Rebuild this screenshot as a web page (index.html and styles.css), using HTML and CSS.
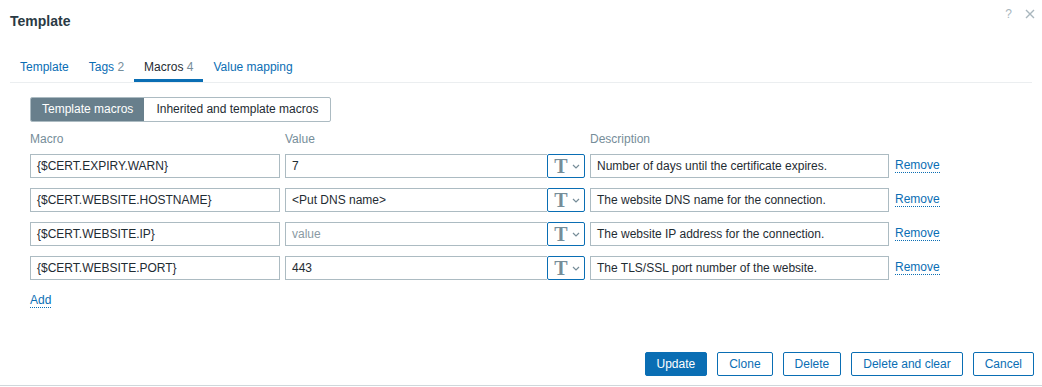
FILE: index.html
```html
<!DOCTYPE html>
<html>
<head>
<meta charset="utf-8">
<link rel="stylesheet" href="styles.css">
</head>
<body>
<div class="dialog">
  <div class="head">
    <h4 class="title">Template</h4>
    <div class="head-icons">
      <span class="help">?</span>
      <svg class="close" width="10" height="10" viewBox="0 0 10 10"><path d="M1 1L9 9M9 1L1 9" stroke="#a9b6bd" stroke-width="1.4" fill="none"/></svg>
    </div>
  </div>
  <ul class="tabs">
    <li class="tab">Template</li>
    <li class="tab">Tags <span class="cnt">2</span></li>
    <li class="tab active">Macros <span class="cnt">4</span></li>
    <li class="tab">Value mapping</li>
  </ul>
  <div class="body">
    <div class="toggle">
      <span class="seg on">Template macros</span>
      <span class="seg">Inherited and template macros</span>
    </div>
    <div class="grid">
      <div class="lbl">Macro</div>
      <div class="lbl">Value</div>
      <div class="lbl">Description</div>
      <div></div>

      <div class="field">{$CERT.EXPIRY.WARN}</div>
      <div class="value"><div class="field vtext">7</div><span class="tbtn"><span class="tglyph">T</span><svg width="8" height="5" viewBox="0 0 8 5"><path d="M1 1L4 4L7 1" stroke="#768d99" stroke-width="1.2" fill="none"/></svg></span></div>
      <div class="field">Number of days until the certificate expires.</div>
      <a class="link">Remove</a>

      <div class="field">{$CERT.WEBSITE.HOSTNAME}</div>
      <div class="value"><div class="field vtext">&lt;Put DNS name&gt;</div><span class="tbtn"><span class="tglyph">T</span><svg width="8" height="5" viewBox="0 0 8 5"><path d="M1 1L4 4L7 1" stroke="#768d99" stroke-width="1.2" fill="none"/></svg></span></div>
      <div class="field">The website DNS name for the connection.</div>
      <a class="link">Remove</a>

      <div class="field">{$CERT.WEBSITE.IP}</div>
      <div class="value"><div class="field vtext ph">value</div><span class="tbtn"><span class="tglyph">T</span><svg width="8" height="5" viewBox="0 0 8 5"><path d="M1 1L4 4L7 1" stroke="#768d99" stroke-width="1.2" fill="none"/></svg></span></div>
      <div class="field">The website IP address for the connection.</div>
      <a class="link">Remove</a>

      <div class="field">{$CERT.WEBSITE.PORT}</div>
      <div class="value"><div class="field vtext">443</div><span class="tbtn"><span class="tglyph">T</span><svg width="8" height="5" viewBox="0 0 8 5"><path d="M1 1L4 4L7 1" stroke="#768d99" stroke-width="1.2" fill="none"/></svg></span></div>
      <div class="field">The TLS/SSL port number of the website.</div>
      <a class="link">Remove</a>
    </div>
    <a class="link add">Add</a>
  </div>
  <div class="footer">
    <span class="btn primary">Update</span>
    <span class="btn">Clone</span>
    <span class="btn">Delete</span>
    <span class="btn">Delete and clear</span>
    <span class="btn">Cancel</span>
  </div>
</div>
</body>
</html>
```
FILE: styles.css
```css
* { box-sizing: border-box; }
html, body { margin: 0; padding: 0; background: #fff; }
body {
  font-family: "Liberation Sans", Arial, sans-serif;
  font-size: 12px;
  color: #1f2c33;
}
.dialog {
  width: 1042px;
  height: 387px;
  display: flex;
  flex-direction: column;
}
.head {
  display: flex;
  justify-content: space-between;
  padding: 13px 10px 0 10px;
  height: 52px;
}
.title {
  margin: 0;
  font-size: 14px;
  font-weight: bold;
  line-height: 16px;
  color: #2a3a44;
}
.head-icons {
  display: flex;
  align-items: center;
  gap: 13px;
  height: 10px;
  margin-top: -4px;
  margin-right: -3px;
}
.help { color: #a9b6bd; font-size: 12px; line-height: 10px; }
.tabs {
  list-style: none;
  margin: 0 10px;
  padding: 0;
  display: flex;
  border-bottom: 1px solid #ebeef0;
  height: 31px;
}
.tab {
  padding: 8px 10px 0;
  color: #0a6eb4;
  font-size: 12px;
  line-height: 14px;
  height: 30px;
}
.tab .cnt { color: #768d99; }
.tab.active {
  color: #1f2c33;
  border-bottom: 3px solid #0a6eb4;
}
.body {
  padding: 14px 30px 0 30px;
  flex: 1;
}
.toggle {
  display: inline-flex;
  height: 25px;
  border: 1px solid #acbbc2;
  border-radius: 2px;
  overflow: hidden;
}
.seg {
  padding: 0 12px;
  line-height: 23px;
  font-size: 12px;
  color: #1f2c33;
}
.seg.on {
  background: #687f8c;
  color: #fff;
  padding: 0 11px 0 11px;
}
.grid {
  display: grid;
  grid-template-columns: 250px 300px 299px auto;
  column-gap: 5px;
  row-gap: 10px;
  align-items: center;
  margin-top: 10px;
  width: max-content;
}
.lbl {
  color: #768d99;
  line-height: 14px;
  margin-bottom: -2px;
  height: 14px;
}
.field {
  height: 24px;
  border: 1px solid #acbbc2;
  padding: 0 6px;
  line-height: 22px;
  white-space: nowrap;
  overflow: hidden;
  background: #fff;
}
.value { display: flex; height: 24px; }
.vtext { flex: 1; border-right: none; }
.ph { color: #8a9aa3; }
.tbtn {
  width: 38px;
  height: 24px;
  border: 1px solid #0a6eb4;
  border-radius: 2px;
  display: flex;
  align-items: center;
  justify-content: center;
  gap: 4px;
  padding-left: 2px;
}
.tglyph {
  font-family: "Liberation Serif", "Times New Roman", serif;
  font-weight: bold;
  font-size: 20px;
  line-height: 20px;
  color: #768d99;
}
.link {
  color: #0a6eb4;
  text-decoration: none;
  border-bottom: 1px dotted #0a6eb4;
  line-height: 13px;
  margin-left: 1px;
  justify-self: start;
}
.add {
  display: inline-block;
  margin-top: 14px;
  margin-left: 0;
}
.footer {
  display: flex;
  justify-content: flex-end;
  gap: 10px;
  padding: 0 8px 8px 0;
  border-bottom: 1px solid #d0d7db;
  height: 34px;
  margin-bottom: 1px;
}
.btn {
  height: 24px;
  line-height: 22px;
  border: 1px solid #0a6eb4;
  border-radius: 2px;
  color: #0a6eb4;
  padding: 0 11px;
  font-size: 12px;
  background: #fff;
  min-width: 55px;
  text-align: center;
}
.btn.primary {
  background: #0a6eb4;
  color: #fff;
}
```
